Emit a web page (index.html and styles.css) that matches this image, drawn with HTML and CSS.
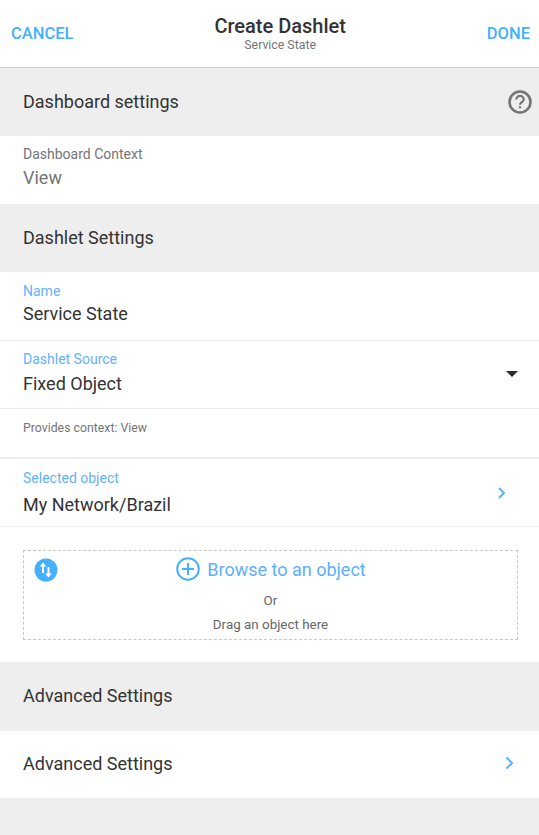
FILE: index.html
```html
<!DOCTYPE html>
<html lang="en">
<head>
  <meta charset="UTF-8">
  <title>Create Dashlet</title>
  <link rel="stylesheet" href="styles.css">
</head>
<body>
  <header class="top-bar">
    <span class="top-action">CANCEL</span>
    <div class="top-title">
      <h1>Create Dashlet</h1>
      <p>Service State</p>
    </div>
    <span class="top-action">DONE</span>
  </header>

  <!-- Dashboard settings -->
  <div class="section-head">
    <span>Dashboard settings</span>
    <svg class="help-icon" width="24" height="24" viewBox="0 0 24 24">
      <circle cx="12" cy="12" r="10.5" fill="none" stroke="#757575" stroke-width="2.6"/>
      <path d="M8.3 9.6a3.7 3.7 0 0 1 7.4 0c0 2.4-3.7 2.6-3.7 5.2" fill="none" stroke="#757575" stroke-width="2.2"/>
      <rect x="10.9" y="16.2" width="2.2" height="2.2" fill="#757575"/>
    </svg>
  </div>
  <div class="field context-field">
    <label class="field-label grey">Dashboard Context</label>
    <div class="field-value grey">View</div>
  </div>

  <!-- Dashlet settings -->
  <div class="section-head"><span>Dashlet Settings</span></div>
  <div class="field name-field">
    <label class="field-label">Name</label>
    <div class="field-value">Service State</div>
  </div>
  <div class="field source-field">
    <div>
      <label class="field-label">Dashlet Source</label>
      <div class="field-value">Fixed Object</div>
    </div>
    <span class="caret"></span>
  </div>
  <div class="hint">Provides context: View</div>
  <div class="field selected-field">
    <div>
      <label class="field-label">Selected object</label>
      <div class="field-value">My Network/Brazil</div>
    </div>
    <svg class="chevron small" width="10" height="14" viewBox="0 0 10 14">
      <path d="M2 2l5 5-5 5" fill="none" stroke="#5cb0ff" stroke-width="2"/>
    </svg>
  </div>

  <div class="drop-wrap">
    <div class="drop-box">
      <svg class="swap-icon" width="24" height="24" viewBox="0 0 24 24">
        <circle cx="12" cy="12" r="11.5" fill="#45b0ff"/>
        <path d="M9 15V7M14.5 9v8" fill="none" stroke="#fff" stroke-width="2"/>
        <path d="M9 4.5l3.4 4H5.6zM14.5 19.5l-3.4-4h6.8z" fill="#fff"/>
      </svg>
      <div class="browse">
        <svg width="24" height="24" viewBox="0 0 24 24">
          <circle cx="12" cy="12" r="10.8" fill="none" stroke="#45b0ff" stroke-width="2"/>
          <path d="M12 6v12M6 12h12" stroke="#45b0ff" stroke-width="2"/>
        </svg>
        <span>Browse to an object</span>
      </div>
      <div class="drop-text">Or</div>
      <div class="drop-text">Drag an object here</div>
    </div>
  </div>

  <!-- Advanced settings -->
  <div class="section-head advanced-head"><span>Advanced Settings</span></div>
  <div class="link-row">
    <span>Advanced Settings</span>
    <svg class="chevron" width="12" height="16" viewBox="0 0 12 16">
      <path d="M2.5 2.5L8 8l-5.5 5.5" fill="none" stroke="#5cb0ff" stroke-width="2"/>
    </svg>
  </div>
  <div class="page-end"></div>
</body>
</html>
```

FILE: styles.css
```css
html, body {
  margin: 0;
  padding: 0;
}

body {
  font-family: Roboto, "Liberation Sans", sans-serif;
  background-color: #fff;
  color: #333;
  height: 835px;
  overflow: hidden;
}

/* Top bar */
.top-bar {
  display: flex;
  align-items: center;
  justify-content: space-between;
  height: 67px;
  padding: 0 9px 0 11px;
  border-bottom: 1px solid #d0d0d0;
}

.top-action {
  color: #45b0ff;
  font-size: 16.5px;
  font-weight: 500;
}

.top-title {
  text-align: center;
  margin-top: -1px;
}

.top-title h1 {
  margin: 0;
  font-size: 20px;
  font-weight: 500;
  line-height: 24px;
}

.top-title p {
  margin: 0;
  font-size: 12.3px;
  line-height: 14px;
  color: #757575;
}

/* Section heads */
.section-head {
  display: flex;
  align-items: center;
  justify-content: space-between;
  box-sizing: border-box;
  height: 68px;
  padding: 0 7px 0 23px;
  background-color: #eee;
  font-size: 18px;
}

.section-head span {
  margin-bottom: 2px;
}

.advanced-head {
  height: 69px;
}

/* Fields */
.field {
  display: flex;
  align-items: center;
  justify-content: space-between;
  padding: 0 23px;
  background-color: #fff;
  height: 67px;
  border-bottom: 1px solid #eee;
}

.field-label {
  display: block;
  color: #62b2ff;
  font-size: 14px;
  line-height: 16px;
}

.field-value {
  font-size: 18px;
  line-height: 22px;
  margin-top: 3px;
}

.grey {
  color: #757575;
}

.context-field {
  display: block;
  height: 68px;
  padding-top: 10px;
  box-sizing: border-box;
  border-bottom: none;
}

.context-field .field-value {
  margin-top: 5px;
}

.name-field {
  display: block;
  box-sizing: border-box;
  height: 69px;
  padding-top: 11px;
}

.name-field .field-value {
  margin-top: 4px;
}

.source-field {
  box-sizing: border-box;
  height: 68px;
  padding-top: 1px;
}

.source-field .field-value {
  margin-top: 6px;
}

.source-field > div {
  margin-top: -5px;
}

.selected-field {
  box-sizing: border-box;
  height: 68px;
}

.selected-field .field-value {
  margin-top: 8px;
}

.caret {
  width: 0;
  height: 0;
  margin-right: -2px;
  margin-bottom: 3px;
  border-left: 6px solid transparent;
  border-right: 6px solid transparent;
  border-top: 6px solid #2b2b2b;
}

.hint {
  box-sizing: border-box;
  height: 50px;
  padding: 11px 23px 0;
  font-size: 12.3px;
  line-height: 16px;
  color: #757575;
  border-bottom: 2px solid #eee;
}

.chevron.small {
  margin-right: 9px;
}

/* Drop area */
.drop-wrap {
  box-sizing: border-box;
  height: 135px;
  padding: 23px 21px 0 23px;
}

.drop-box {
  position: relative;
  box-sizing: border-box;
  height: 90px;
  padding-top: 7px;
  border: 1px dashed #c8c8c8;
  text-align: center;
}

.swap-icon {
  position: absolute;
  left: 10px;
  top: 7px;
}

.browse {
  display: flex;
  align-items: center;
  justify-content: center;
  gap: 7px;
  padding-left: 1px;
  color: #5cb0ff;
  font-size: 18px;
  height: 24px;
  margin-bottom: -1px;
  margin-top: -1px;
}

.drop-text {
  margin-top: 8px;
  font-size: 13.4px;
  line-height: 16px;
  color: #666;
}

.browse + .drop-text {
  margin-top: 13px;
}

/* Bottom link row */
.link-row {
  display: flex;
  align-items: center;
  justify-content: space-between;
  height: 67px;
  padding: 0 23px;
  font-size: 18px;
}

.link-row span {
  margin-bottom: 2px;
}

.link-row .chevron {
  margin-bottom: 4px;
}

.page-end {
  height: 37px;
  background-color: #eee;
}
```
